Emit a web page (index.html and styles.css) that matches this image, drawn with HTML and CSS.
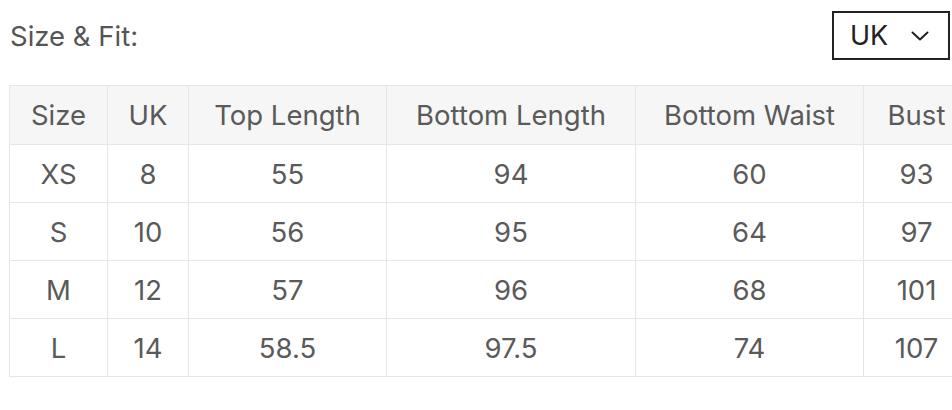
FILE: index.html
```html
<!DOCTYPE html>
<html lang="en">
<head>
<meta charset="utf-8">
<title>Size &amp; Fit</title>
<link rel="stylesheet" href="styles.css">
</head>
<body>
<div class="panel">
  <div class="topbar">
    <h2 class="title">Size &amp; Fit:</h2>
    <div class="select">
      <span class="select-value">UK</span>
      <svg class="chevron" width="18" height="10" viewBox="0 0 18 10" aria-hidden="true">
        <path d="M1.5 1.5 L9 8.5 L16.5 1.5" fill="none" stroke="#222" stroke-width="2" stroke-linecap="round" stroke-linejoin="round"/>
      </svg>
    </div>
  </div>
  <div class="table-wrap">
    <table class="size-table">
      <colgroup>
        <col class="c-size">
        <col class="c-uk">
        <col class="c-top">
        <col class="c-blen">
        <col class="c-bwaist">
        <col class="c-bust">
      </colgroup>
      <thead>
        <tr><th>Size</th><th>UK</th><th>Top Length</th><th>Bottom Length</th><th>Bottom Waist</th><th>Bust</th></tr>
      </thead>
      <tbody>
        <tr><td>XS</td><td>8</td><td>55</td><td>94</td><td>60</td><td>93</td></tr>
        <tr><td>S</td><td>10</td><td>56</td><td>95</td><td>64</td><td>97</td></tr>
        <tr><td>M</td><td>12</td><td>57</td><td>96</td><td>68</td><td>101</td></tr>
        <tr><td>L</td><td>14</td><td>58.5</td><td>97.5</td><td>74</td><td>107</td></tr>
      </tbody>
    </table>
  </div>
</div>
</body>
</html>
```
FILE: styles.css
```css
html, body {
  margin: 0;
  padding: 0;
  background: #ffffff;
}
body {
  font-family: Inter, "Liberation Sans", Arial, sans-serif;
  color: #575757;
  overflow: hidden;
}
.panel {
  padding: 11px 2px 0 9px;
}
.topbar {
  display: flex;
  justify-content: space-between;
  align-items: center;
}
.title {
  margin: 0;
  padding-left: 1px;
  font-size: 27.5px;
  font-weight: 400;
  color: #555;
}
.select {
  box-sizing: border-box;
  width: 118px;
  height: 49px;
  border: 2px solid #222;
  display: flex;
  align-items: center;
  padding: 0 18px 0 16px;
  gap: 23px;
  color: #222;
  font-size: 27px;
}
.select-value {
  line-height: 1;
}
.chevron {
  display: block;
}
.table-wrap {
  margin-top: 25px;
  margin-right: -2px;
  overflow: hidden;
}
.size-table {
  border-collapse: collapse;
  table-layout: fixed;
  width: 960px;
  font-size: 27.5px;
  color: #5a5a5a;
}
.c-size { width: 98px; }
.c-uk { width: 81px; }
.c-top { width: 198px; }
.c-blen { width: 249px; }
.c-bwaist { width: 228px; }
.c-bust { width: 106px; }
.size-table th,
.size-table td {
  border: 1px solid #e6e6e6;
  text-align: center;
  font-weight: 400;
  padding: 0;
  white-space: nowrap;
}
.size-table th {
  background: #f6f6f6;
  height: 58px;
}
.size-table td {
  height: 57px;
}
```
